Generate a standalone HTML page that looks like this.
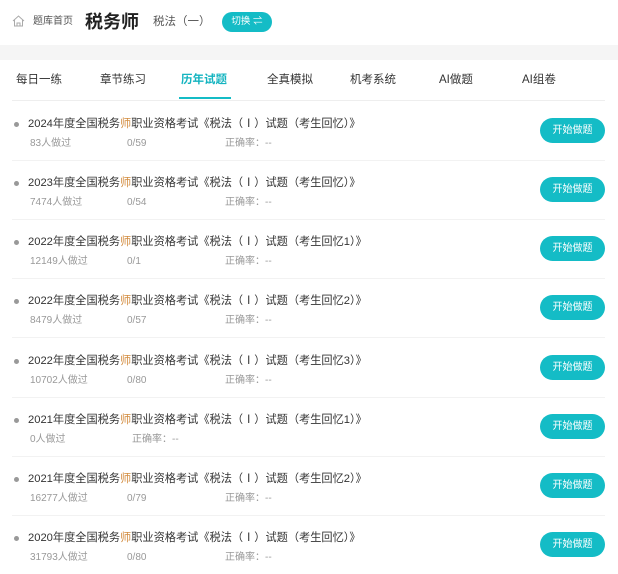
<!DOCTYPE html><html><head><meta charset="utf-8"><style>
body{margin:0;width:618px;height:566px;overflow:hidden;background:#fff;font-family:"Liberation Sans","Noto Sans CJK SC",sans-serif;color:#333;position:relative}
.a{position:absolute;white-space:nowrap}
.band{position:absolute;left:0;top:45px;width:618px;height:15px;background:#f5f5f5}
.tab{position:absolute;top:72px;font-size:11.5px;line-height:16px;color:#333}
.row{position:absolute;left:12px;width:593px;height:58px;border-bottom:1px solid #f2f2f2}
.row>*{margin-left:-12px}
.dot{position:absolute;left:14px;top:20px;width:5px;height:5px;border-radius:50%;background:#999}
.t{position:absolute;left:28px;top:14px;font-size:11.2px;line-height:16px;color:#333}
.s{position:absolute;top:35px;font-size:10px;line-height:14px;color:#999}
.b{position:absolute;left:540px;top:16px;width:65px;height:25px;border-radius:13px;background:#14bcc6;color:#fff;font-size:10px;text-align:center;line-height:25px}
.o{color:#d28a3c}
</style></head><body>
<svg class="a" style="left:12px;top:15px" width="13" height="12" viewBox="0 0 13 12"><path d="M1 6 L6.5 1 L12 6 M2.5 5 V11 H10.5 V5 M5 11 V8 H8 V11" fill="none" stroke="#aaa" stroke-width="1"/></svg>
<div class="a" style="left:33px;top:16px;font-size:10px;line-height:12px;color:#555">题库首页</div>
<div class="a" style="left:85px;top:10px;font-size:18px;line-height:24px;font-weight:bold;color:#222">税务师</div>
<div class="a" style="left:153px;top:14px;font-size:11.5px;line-height:16px;color:#555">税法（一）</div>
<div class="a" style="left:222px;top:12px;width:50px;height:20px;border-radius:10px;background:#14bcc6;color:#fff;font-size:9.5px;line-height:20px;text-align:center">切换 ⇌</div>
<div class="band"></div>
<div class="tab" style="left:16px">每日一练</div>
<div class="tab" style="left:100px">章节练习</div>
<div class="tab" style="left:181px;color:#14b4c0;font-weight:bold">历年试题</div>
<div class="tab" style="left:267px">全真模拟</div>
<div class="tab" style="left:350px">机考系统</div>
<div class="tab" style="left:439px">AI做题</div>
<div class="tab" style="left:522px">AI组卷</div>
<div class="a" style="left:179px;top:97px;width:52px;height:2px;background:#14bcc6"></div>
<div class="a" style="left:12px;top:100px;width:593px;height:1px;background:#eee"></div>

<div class="row" style="top:102px"><div class="dot"></div><div class="t">2024年度全国税务<span class="o">师</span>职业资格考试《税法（Ⅰ）试题（考生回忆）》</div><div class="s" style="left:30px">83人做过</div><div class="s" style="left:127px">0/59</div><div class="s" style="left:225px">正确率：--</div><div class="b">开始做题</div></div>
<div class="row" style="top:161px"><div class="dot"></div><div class="t">2023年度全国税务<span class="o">师</span>职业资格考试《税法（Ⅰ）试题（考生回忆）》</div><div class="s" style="left:30px">7474人做过</div><div class="s" style="left:127px">0/54</div><div class="s" style="left:225px">正确率：--</div><div class="b">开始做题</div></div>
<div class="row" style="top:220px"><div class="dot"></div><div class="t">2022年度全国税务<span class="o">师</span>职业资格考试《税法（Ⅰ）试题（考生回忆1）》</div><div class="s" style="left:30px">12149人做过</div><div class="s" style="left:127px">0/1</div><div class="s" style="left:225px">正确率：--</div><div class="b">开始做题</div></div>
<div class="row" style="top:279px"><div class="dot"></div><div class="t">2022年度全国税务<span class="o">师</span>职业资格考试《税法（Ⅰ）试题（考生回忆2）》</div><div class="s" style="left:30px">8479人做过</div><div class="s" style="left:127px">0/57</div><div class="s" style="left:225px">正确率：--</div><div class="b">开始做题</div></div>
<div class="row" style="top:339px"><div class="dot"></div><div class="t">2022年度全国税务<span class="o">师</span>职业资格考试《税法（Ⅰ）试题（考生回忆3）》</div><div class="s" style="left:30px">10702人做过</div><div class="s" style="left:127px">0/80</div><div class="s" style="left:225px">正确率：--</div><div class="b">开始做题</div></div>
<div class="row" style="top:398px"><div class="dot"></div><div class="t">2021年度全国税务<span class="o">师</span>职业资格考试《税法（Ⅰ）试题（考生回忆1）》</div><div class="s" style="left:30px">0人做过</div><div class="s" style="left:132px">正确率：--</div><div class="b">开始做题</div></div>
<div class="row" style="top:457px"><div class="dot"></div><div class="t">2021年度全国税务<span class="o">师</span>职业资格考试《税法（Ⅰ）试题（考生回忆2）》</div><div class="s" style="left:30px">16277人做过</div><div class="s" style="left:127px">0/79</div><div class="s" style="left:225px">正确率：--</div><div class="b">开始做题</div></div>
<div class="row" style="top:516px;border:none"><div class="dot"></div><div class="t">2020年度全国税务<span class="o">师</span>职业资格考试《税法（Ⅰ）试题（考生回忆）》</div><div class="s" style="left:30px">31793人做过</div><div class="s" style="left:127px">0/80</div><div class="s" style="left:225px">正确率：--</div><div class="b">开始做题</div></div>
</body></html>
